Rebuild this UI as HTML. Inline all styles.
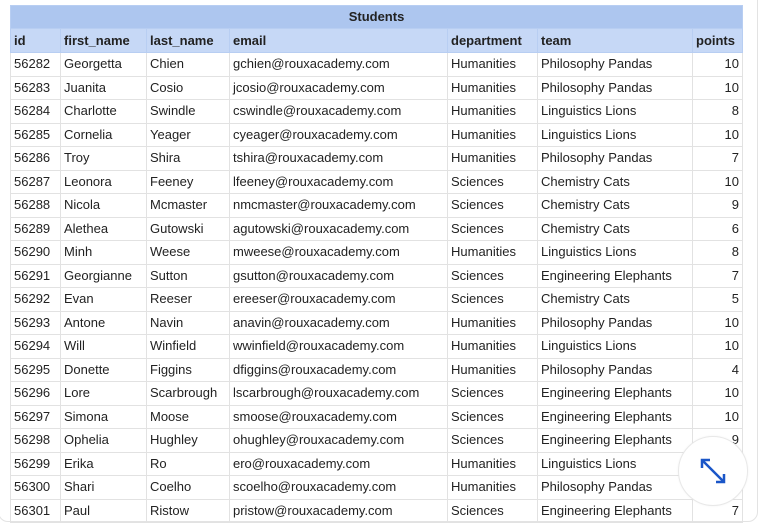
<!DOCTYPE html>
<html><head><style>
body{margin:0;background:#fff;width:766px;height:522px;overflow:hidden;position:relative;font-family:"Liberation Sans",Arial,sans-serif;}
.card{position:absolute;left:-2px;top:-10px;width:758px;height:530px;border:1px solid #e3e3e3;border-radius:10px;}
table{position:absolute;left:10px;top:5px;border-collapse:collapse;font-size:13px;color:#222;}
td{border:1px solid #e2e2e2;height:22.5px;padding:0 3px;white-space:nowrap;line-height:22px;}
tr.t td{background:#adc6ef;font-weight:bold;text-align:center;height:22px;border-color:#b8cef2}
tr.h td{background:#c6d8f6;font-weight:bold;height:23px;border-color:#b8cef2}
td.n{text-align:right}
.btn{position:absolute;left:678px;top:436px;width:68px;height:68px;border-radius:50%;background:#fff;border:1px solid #e8e8e8;box-shadow:0 0 2px rgba(0,0,0,.05)}
</style></head><body>
<div class="card"></div>
<table>
<colgroup><col style="width:50px"><col style="width:86px"><col style="width:83px"><col style="width:218px"><col style="width:90px"><col style="width:155px"><col style="width:50px"></colgroup>
<tr class="t"><td colspan="7">Students</td></tr>
<tr class="h"><td>id</td><td>first_name</td><td>last_name</td><td>email</td><td>department</td><td>team</td><td>points</td></tr>
<tr><td>56282</td><td>Georgetta</td><td>Chien</td><td>gchien@rouxacademy.com</td><td>Humanities</td><td>Philosophy Pandas</td><td class="n">10</td></tr>
<tr><td>56283</td><td>Juanita</td><td>Cosio</td><td>jcosio@rouxacademy.com</td><td>Humanities</td><td>Philosophy Pandas</td><td class="n">10</td></tr>
<tr><td>56284</td><td>Charlotte</td><td>Swindle</td><td>cswindle@rouxacademy.com</td><td>Humanities</td><td>Linguistics Lions</td><td class="n">8</td></tr>
<tr><td>56285</td><td>Cornelia</td><td>Yeager</td><td>cyeager@rouxacademy.com</td><td>Humanities</td><td>Linguistics Lions</td><td class="n">10</td></tr>
<tr><td>56286</td><td>Troy</td><td>Shira</td><td>tshira@rouxacademy.com</td><td>Humanities</td><td>Philosophy Pandas</td><td class="n">7</td></tr>
<tr><td>56287</td><td>Leonora</td><td>Feeney</td><td>lfeeney@rouxacademy.com</td><td>Sciences</td><td>Chemistry Cats</td><td class="n">10</td></tr>
<tr><td>56288</td><td>Nicola</td><td>Mcmaster</td><td>nmcmaster@rouxacademy.com</td><td>Sciences</td><td>Chemistry Cats</td><td class="n">9</td></tr>
<tr><td>56289</td><td>Alethea</td><td>Gutowski</td><td>agutowski@rouxacademy.com</td><td>Sciences</td><td>Chemistry Cats</td><td class="n">6</td></tr>
<tr><td>56290</td><td>Minh</td><td>Weese</td><td>mweese@rouxacademy.com</td><td>Humanities</td><td>Linguistics Lions</td><td class="n">8</td></tr>
<tr><td>56291</td><td>Georgianne</td><td>Sutton</td><td>gsutton@rouxacademy.com</td><td>Sciences</td><td>Engineering Elephants</td><td class="n">7</td></tr>
<tr><td>56292</td><td>Evan</td><td>Reeser</td><td>ereeser@rouxacademy.com</td><td>Sciences</td><td>Chemistry Cats</td><td class="n">5</td></tr>
<tr><td>56293</td><td>Antone</td><td>Navin</td><td>anavin@rouxacademy.com</td><td>Humanities</td><td>Philosophy Pandas</td><td class="n">10</td></tr>
<tr><td>56294</td><td>Will</td><td>Winfield</td><td>wwinfield@rouxacademy.com</td><td>Humanities</td><td>Linguistics Lions</td><td class="n">10</td></tr>
<tr><td>56295</td><td>Donette</td><td>Figgins</td><td>dfiggins@rouxacademy.com</td><td>Humanities</td><td>Philosophy Pandas</td><td class="n">4</td></tr>
<tr><td>56296</td><td>Lore</td><td>Scarbrough</td><td>lscarbrough@rouxacademy.com</td><td>Sciences</td><td>Engineering Elephants</td><td class="n">10</td></tr>
<tr><td>56297</td><td>Simona</td><td>Moose</td><td>smoose@rouxacademy.com</td><td>Sciences</td><td>Engineering Elephants</td><td class="n">10</td></tr>
<tr><td>56298</td><td>Ophelia</td><td>Hughley</td><td>ohughley@rouxacademy.com</td><td>Sciences</td><td>Engineering Elephants</td><td class="n">9</td></tr>
<tr><td>56299</td><td>Erika</td><td>Ro</td><td>ero@rouxacademy.com</td><td>Humanities</td><td>Linguistics Lions</td><td class="n"></td></tr>
<tr><td>56300</td><td>Shari</td><td>Coelho</td><td>scoelho@rouxacademy.com</td><td>Humanities</td><td>Philosophy Pandas</td><td class="n"></td></tr>
<tr><td>56301</td><td>Paul</td><td>Ristow</td><td>pristow@rouxacademy.com</td><td>Sciences</td><td>Engineering Elephants</td><td class="n">7</td></tr>
</table>
<div class="btn"><svg width="68" height="68" viewBox="0 0 68 68"><g stroke="#1a56c8" stroke-width="2.5" fill="none"><path d="M23 23L45 45"/><path d="M23 31V23H31"/><path d="M45 37V45H37"/></g></svg></div>
</body></html>
